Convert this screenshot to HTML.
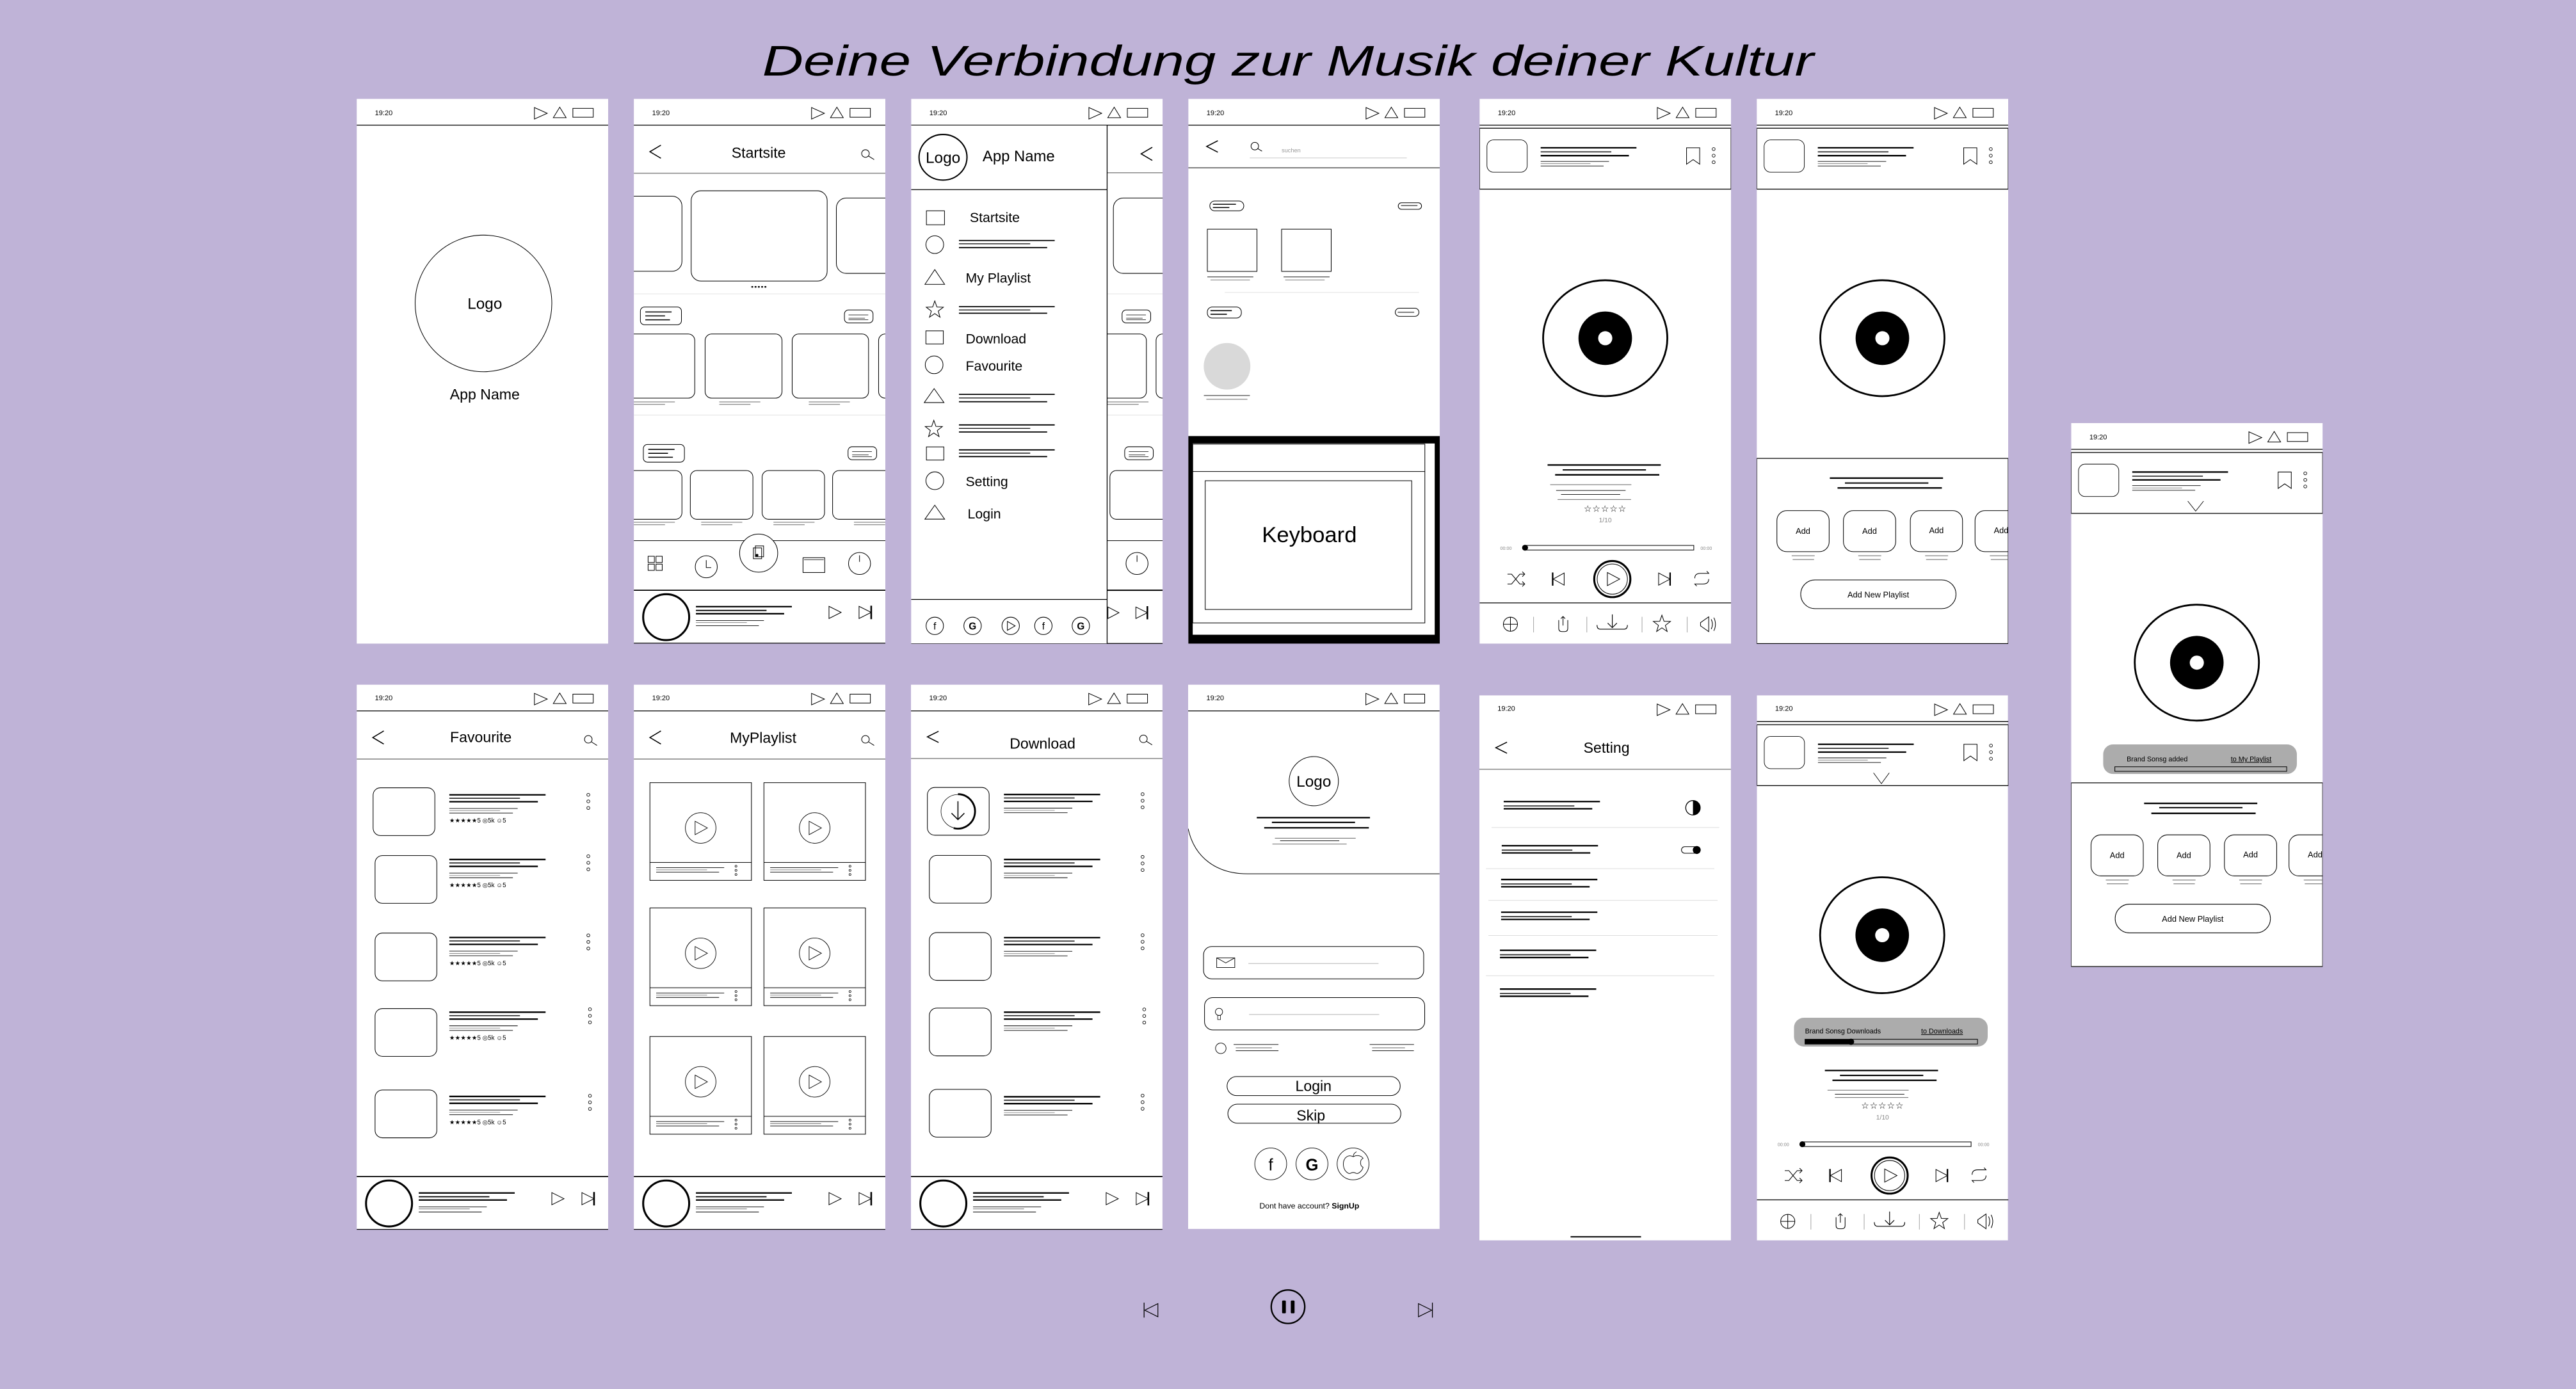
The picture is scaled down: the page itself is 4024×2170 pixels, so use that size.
<!DOCTYPE html>
<html><head><meta charset="utf-8">
<style>
html,body{margin:0;padding:0;background:#bfb3d7;}
svg{display:block;}
svg text{stroke:none;fill:#000;font-family:"Liberation Sans",sans-serif;}
</style></head>
<body>
<svg xmlns="http://www.w3.org/2000/svg" width="4024" height="2170" viewBox="0 0 1568 846" preserveAspectRatio="none">
<defs>
<clipPath id="fc" clipPathUnits="userSpaceOnUse"><rect x="0" y="0" width="153.1" height="332"/></clipPath>
<g id="sbi" stroke-width=".4"><path d="M108.2,5.3 L116,8.8 L108.2,12.3Z M123.6,5.1 L119.7,11.5 L127.5,11.5Z"/><rect x="131.6" y="5.8" width="12.4" height="5.4"/><path d="M0,16H153.1" stroke-width=".5"/></g>
<g id="hdr"><path d="M16.5,28.2 L9.8,32.2 L16.5,36.2" stroke-width=".6"/><circle cx="141" cy="33.3" r="2.3" stroke-width=".4"/><path d="M142.8,34.8 L146.3,37" stroke-width=".4"/><path d="M0,45.3H153.1" stroke="#888" stroke-width=".6"/></g>
<g id="mini"><path d="M0,0H153.1" stroke-width=".7"/><circle cx="19.7" cy="16.4" r="14" stroke-width="1.2"/><path d="M37.8,10h58.4M37.8,14.3h53.7" stroke-width=".9"/><path d="M37.8,12.3h43" stroke-width=".7"/><path d="M37.8,18.5h41.4M37.8,21.6h38.3" stroke-width=".35"/><path d="M37.8,19.7h31" stroke="#777" stroke-width=".35"/><path d="M118.8,9.8 L126.2,13.5 L118.8,17.2Z M137.1,9.8 L144.5,13.5 L137.1,17.2Z" stroke-width=".4"/><path d="M144.5,9.4V17.6" stroke-width="1"/><path d="M0,32.2H153.1" stroke-width=".5"/></g>
<g id="lb"><path d="M0,0h58.6M0,4.2h53.9" stroke-width=".9"/><path d="M0,2.1h43" stroke="#333" stroke-width=".7"/><path d="M0,8.3h41.6M0,11.1h38.7" stroke-width=".35"/><path d="M0,9.7h30.9" stroke="#888" stroke-width=".35"/></g>
<g id="l3"><path d="M0,0h58.6M0,4.4h53.9" stroke-width=".9"/><path d="M0,2.7h43" stroke="#333" stroke-width=".7"/></g>
<g id="d3" stroke-width=".35"><circle cx="0" cy="0" r=".9"/><circle cx="0" cy="4" r=".9"/><circle cx="0" cy="8" r=".9"/></g>
<polygon id="star" points="0,-5.5 1.3,-1.8 5.2,-1.7 2.1,0.7 3.2,4.4 0,2.2 -3.2,4.4 -2.1,0.7 -5.2,-1.7 -1.3,-1.8" stroke-width=".4"/>
<g id="disc"><ellipse cx="0" cy="0" rx="37.8" ry="35.3" stroke-width="1.1"/><circle r="16.3" fill="#000" stroke="none"/><circle r="4.3" fill="#fff" stroke="none"/></g>
<g id="ptop"><rect x="0" y="17.9" width="153.1" height="37.1" stroke-width=".5"/><rect x="4.5" y="25" width="24.5" height="19.7" rx="4" stroke-width=".35"/><path d="M37.2,29.8h58.3M37.2,34.6h53.7" stroke-width=".9"/><path d="M37.2,32.3h43" stroke="#333" stroke-width=".7"/><path d="M37.2,38.1h41.6M37.2,40.9h38.3" stroke-width=".35"/><path d="M37.2,39.5h30.3" stroke="#777" stroke-width=".35"/><path d="M126,29.8V39.8L130,37L134,39.8V29.8Z" stroke-width=".4"/><use href="#d3" x="142.5" y="30.6"/></g>
<g id="pbot"><path d="M41.4,223h68.9M46,229h63.4" stroke-width=".9"/><path d="M50.6,226h50.7" stroke-width=".8"/><path d="M43,235h49.4M47.5,244h44.7" stroke="#555" stroke-width=".35"/><path d="M46.6,238.5h42.3M49.6,241h36" stroke-width=".35"/>
<rect x="27.7" y="272" width="102.7" height="2.8" stroke-width=".4"/><circle cx="27.7" cy="273.4" r="1.8" fill="#000" stroke="none"/>
<path d="M17,289.5h2.5l5,6h3M17,295.5h2.5l5,-6h3M26,288l1.5,1.5l-1.5,1.5M26,294l1.5,1.5l-1.5,1.5" stroke-width=".4"/>
<path d="M44.5,288.5V296.5" stroke-width=".9"/><path d="M51.5,288.8L44.8,292.5L51.5,296.2Z" stroke-width=".4"/>
<circle cx="80.8" cy="292.5" r="11" stroke-width="1.2"/><circle cx="80.8" cy="292.5" r="9.2" stroke-width=".4"/><path d="M77.8,288.5L85.3,292.5L77.8,296.5Z" stroke-width=".4"/>
<path d="M109,288.8L116,292.5L109,296.2Z" stroke-width=".4"/><path d="M116,288.5V296.5" stroke-width=".9"/>
<path d="M131,292q0,-3 3.5,-3h5l-1.2,-1.3M139.5,292.5q0,3 -3.5,3h-5l1.2,1.3" stroke-width=".4"/>
<path d="M0,307H153.1" stroke-width=".5"/>
<circle cx="18.8" cy="320" r="4.3" stroke-width=".4"/><path d="M14.5,320h8.6M18.8,315.7v8.6" stroke-width=".4"/>
<path d="M48.2,317.5v5q0,2 2,2h1.5q2,0 2,-2v-5M50.8,315.3v5.5M49.5,316.6l1.3,-1.3l1.3,1.3" stroke-width=".4"/>
<path d="M71.5,320.5q0,2.5 2,2.5h14.5q2,0 2,-2.5M80.8,314v8M78,319.3l2.8,2.8l2.8,-2.8" stroke-width=".45"/>
<use href="#star" x="111" y="320"/>
<path d="M139.5,315.5L134.5,319L134.5,321L139.5,324.5Z M141,317q1.5,3 0,6M142.6,316q2,4 0,8" stroke-width=".4"/>
<path d="M32.9,315.5v9.5M65.3,315.5v9.5M98.9,315.5v9.5M126.4,315.5v9.5" stroke="#999" stroke-width=".35"/></g>
<g id="addb"><rect x="0" y="0" width="31.8" height="25" rx="6" stroke-width=".4"/><path d="M9,27.5h14M9.6,29.8h13" stroke="#666" stroke-width=".4"/></g>
<g id="pcard"><rect x="0" y="0" width="61.8" height="59.5" stroke-width=".4"/><path d="M0,48.6h61.8" stroke-width=".4"/><circle cx="30.9" cy="27.6" r="9.3" stroke-width=".35"/><path d="M27.5,23.5L35,27.6L27.5,31.7Z" stroke-width=".35"/><path d="M3.8,51.8h41.4M3.8,54.5h38.3" stroke-width=".35"/><path d="M3.8,53.1h31" stroke="#777" stroke-width=".35"/><circle cx="52.4" cy="50.9" r=".6" stroke-width=".3"/><circle cx="52.4" cy="53.4" r=".6" stroke-width=".3"/><circle cx="52.4" cy="55.9" r=".6" stroke-width=".3"/></g>
<g id="pill"><rect x="0" y="0" width="25" height="10.8" rx="2.5" stroke-width=".4"/><path d="M3,3h16M3,5.4h12M3,7.8h15" stroke-width=".6"/></g>
<g id="pills"><rect x="0" y="0" width="17.4" height="7.9" rx="2.5" stroke-width=".4"/><path d="M2.5,3h12M2.5,5h10M2.5,6h12" stroke-width=".3"/></g>
<g id="ul2"><path d="M0,0h25M0,1.5h19" stroke="#555" stroke-width=".35"/></g>
</defs>

<text x="784" y="46" font-size="26" font-style="italic" text-anchor="middle" textLength="640" lengthAdjust="spacingAndGlyphs" style="font-family:'Liberation Sans',sans-serif">Deine Verbindung zur Musik deiner Kultur</text>

<g fill="none" stroke="#000">

<!-- S1 splash -->
<g transform="translate(217.1,60.2)" clip-path="url(#fc)">
<rect width="153.1" height="331.8" fill="#fff" stroke="none"/>
<text x="11.1" y="10" font-size="4.3">19:20</text><use href="#sbi"/>
<circle cx="77.2" cy="124.6" r="41.6" stroke-width=".4"/>
<text x="78" y="128" font-size="9.5" text-anchor="middle">Logo</text>
<text x="78" y="183" font-size="9" text-anchor="middle">App Name</text>
</g>

<!-- S2 Startsite -->
<g transform="translate(385.8,60.2)" clip-path="url(#fc)">
<rect width="153.1" height="331.8" fill="#fff" stroke="none"/>
<text x="11.1" y="10" font-size="4.3">19:20</text><use href="#sbi"/>
<use href="#hdr"/>
<text x="76" y="36" font-size="9" text-anchor="middle">Startsite</text>
<rect x="-15" y="59.3" width="44.3" height="45.7" rx="6" stroke-width=".4"/>
<rect x="34.9" y="56" width="82.8" height="55" rx="6" stroke-width=".4"/>
<rect x="123.3" y="60.4" width="45" height="45.9" rx="6" stroke-width=".4"/>
<path d="M72,114.5h.2M74,114.5h.2M76,114.5h.2M78,114.5h.2M80,114.5h.2" stroke-width="1" stroke-linecap="round"/>
<path d="M0,118.8H153.1M0,192.6H153.1" stroke="#e4e4e4" stroke-width=".4"/>
<use href="#pill" x="4" y="126.8"/><use href="#pills" x="128.2" y="128.6"/>
<rect x="-10" y="143.2" width="47.1" height="39.1" rx="4" stroke-width=".4"/>
<rect x="43.4" y="143.2" width="46.8" height="39.1" rx="4" stroke-width=".4"/>
<rect x="96.4" y="143.2" width="46.5" height="39.1" rx="4" stroke-width=".4"/>
<rect x="149" y="143.2" width="46.5" height="39.1" rx="4" stroke-width=".4"/>
<use href="#ul2" x="0" y="184.6"/><use href="#ul2" x="52" y="184.6"/><use href="#ul2" x="106.5" y="184.6"/>
<use href="#pill" x="5.8" y="210.5"/><use href="#pills" x="130.4" y="211.9"/>
<rect x="-10" y="226.4" width="39.3" height="29.7" rx="4" stroke-width=".4"/>
<rect x="34.4" y="226.4" width="38.1" height="29.7" rx="4" stroke-width=".4"/>
<rect x="78.1" y="226.4" width="38" height="29.7" rx="4" stroke-width=".4"/>
<rect x="121" y="226.4" width="38" height="29.7" rx="4" stroke-width=".4"/>
<use href="#ul2" x="0" y="257.9"/><use href="#ul2" x="41" y="257.9"/><use href="#ul2" x="85" y="257.9"/><use href="#ul2" x="134" y="257.9"/>
<path d="M0,269.1H153.1" stroke-width=".4"/>
<rect x="8.7" y="278.6" width="3.8" height="3.8" stroke-width=".4"/><rect x="13.5" y="278.6" width="3.8" height="3.8" stroke-width=".4"/><rect x="8.7" y="283.4" width="3.8" height="3.8" stroke-width=".4"/><rect x="13.5" y="283.4" width="3.8" height="3.8" stroke-width=".4"/>
<circle cx="44.1" cy="285" r="6.7" stroke-width=".4"/><path d="M44.1,281v4.5h3" stroke-width=".4"/>
<circle cx="76" cy="276.7" r="11.6" fill="#fff" stroke-width=".4"/><rect x="74" y="272.3" width="5" height="6.6" stroke-width=".4"/><rect x="72.8" y="273.5" width="5" height="6.6" stroke-width=".4"/><circle cx="75" cy="278" r=".8" fill="#000" stroke="none"/>
<rect x="103" y="279.5" width="13.2" height="9" stroke-width=".4"/><path d="M103.6,280.7h12" stroke-width=".3"/>
<circle cx="137.4" cy="283" r="6.7" stroke-width=".4"/><path d="M137.4,278v4" stroke-width=".4"/>
<use href="#mini" y="299.3"/>
</g>

<!-- S3 drawer -->
<g transform="translate(554.6,60.2)" clip-path="url(#fc)">
<rect width="153.1" height="331.8" fill="#fff" stroke="none"/>
<text x="11.1" y="10" font-size="4.3">19:20</text><use href="#sbi"/>
<path d="M146.8,29.5L140,33.5L146.8,37.5" stroke-width=".6"/>
<path d="M119.3,45H153.1" stroke="#888" stroke-width=".6"/>
<rect x="123.1" y="60.4" width="40" height="45.9" rx="6" stroke-width=".4"/>
<path d="M119.3,118.8H153.1M119.3,192.6H153.1" stroke="#e4e4e4" stroke-width=".4"/>
<use href="#pills" x="128.4" y="128.6"/>
<rect x="110" y="143.2" width="33.2" height="39.1" rx="4" stroke-width=".4"/><rect x="149.1" y="143.2" width="30" height="39.1" rx="4" stroke-width=".4"/>
<use href="#ul2" x="119.5" y="184.6"/>
<use href="#pills" x="130" y="211.9"/>
<rect x="121" y="226.4" width="40" height="29.7" rx="4" stroke-width=".4"/>
<path d="M119.3,269.1H153.1" stroke-width=".4"/>
<circle cx="137.5" cy="283" r="6.7" stroke-width=".4"/><path d="M137.5,278v4" stroke-width=".4"/>
<path d="M119.3,299.3H153.1" stroke-width=".8"/>
<path d="M119.8,309.5L126.5,313L119.8,316.5Z M136.8,309.5L143.8,313L136.8,316.5Z" stroke-width=".4"/><path d="M143.8,309v8" stroke-width="1"/>
<path d="M0,331.7H153.1" stroke-width=".5"/>
<rect x="0" y="16.2" width="119.3" height="315.5" fill="#fff" stroke="none"/>
<path d="M119.3,16.2V331.7" stroke-width=".5"/>
<ellipse cx="19.4" cy="35.6" rx="14.6" ry="13.9" stroke-width=".8"/>
<text x="19.4" y="39" font-size="9.5" text-anchor="middle">Logo</text>
<text x="43.5" y="38" font-size="9.3">App Name</text>
<path d="M0,55.3H119.3" stroke-width=".5"/>
<rect x="9.3" y="68.2" width="11" height="8.5" stroke-width=".4"/><text x="35.7" y="75" font-size="8.3">Startsite</text>
<circle cx="14.4" cy="88.8" r="5.4" stroke-width=".4"/><path d="M29.1,86.3h58.3M29.1,90.6h53.7" stroke-width=".7"/><path d="M29.1,88.3h43.4" stroke-width=".5"/>
<path d="M8.4,113L14.4,104L20.4,113Z" stroke-width=".4"/><text x="33.2" y="112" font-size="8.3">My Playlist</text>
<use href="#star" x="14.4" y="128.6"/><path d="M29.1,126.6h58.3M29.1,130.6h53.7" stroke-width=".7"/><path d="M29.1,128.6h43.4" stroke-width=".5"/>
<rect x="9" y="141.3" width="10.6" height="8" stroke-width=".4"/><text x="33.2" y="149" font-size="8.3">Download</text>
<circle cx="14" cy="162" r="5.4" stroke-width=".4"/><text x="33.2" y="165.5" font-size="8.3">Favourite</text>
<path d="M8,185L14,176.5L20,185Z" stroke-width=".4"/><path d="M29.1,180h58.3M29.1,184.5h53.7" stroke-width=".7"/><path d="M29.1,182.2h43.4" stroke-width=".5"/>
<use href="#star" x="13.8" y="201.3"/><path d="M29.1,198.6h58.3M29.1,202.9h53.7" stroke-width=".7"/><path d="M29.1,200.7h43.4" stroke-width=".5"/>
<rect x="9.3" y="212" width="10.6" height="8" stroke-width=".4"/><path d="M29.1,213.8h58.3M29.1,217.9h53.7" stroke-width=".7"/><path d="M29.1,215.8h43.4" stroke-width=".5"/>
<circle cx="14.4" cy="232.6" r="5.4" stroke-width=".4"/><text x="33.2" y="236" font-size="8.3">Setting</text>
<path d="M8.4,256L14.4,247.5L20.4,256Z" stroke-width=".4"/><text x="34.4" y="255.5" font-size="8.3">Login</text>
<path d="M0,304.9H119.3" stroke-width=".5"/>
<circle cx="14.4" cy="321" r="5.3" stroke-width=".4"/><text x="14.4" y="323.2" font-size="6" text-anchor="middle">f</text>
<circle cx="37.4" cy="321" r="5.3" stroke-width=".4"/><text x="37.4" y="323.2" font-size="6" font-weight="bold" text-anchor="middle">G</text>
<circle cx="60.6" cy="321" r="5.3" stroke-width=".4"/><path d="M58.6,318.3L63.3,321L58.6,323.7Z" stroke-width=".4"/>
<circle cx="80.5" cy="321" r="5.3" stroke-width=".4"/><text x="80.5" y="323.2" font-size="6" text-anchor="middle">f</text>
<circle cx="103.3" cy="321" r="5.3" stroke-width=".4"/><text x="103.3" y="323.2" font-size="6" font-weight="bold" text-anchor="middle">G</text>
</g>

<!-- S4 search + keyboard -->
<g transform="translate(723.3,60.2)" clip-path="url(#fc)">
<rect width="153.1" height="331.8" fill="#fff" stroke="none"/>
<text x="11.1" y="10" font-size="4.3">19:20</text><use href="#sbi"/>
<path d="M18,25.5L11.2,29L18,32.5" stroke-width=".6"/>
<circle cx="40.5" cy="28.8" r="2.3" stroke-width=".4"/><path d="M42.3,30.3l2.6,1.6" stroke-width=".4"/>
<text x="56.8" y="32.5" font-size="3.6" style="fill:#999">suchen</text>
<path d="M37.4,36H133" stroke="#ccc" stroke-width=".4"/>
<path d="M0,42H153.1" stroke-width=".4"/>
<rect x="13.1" y="62.2" width="20.7" height="6" rx="3" stroke-width=".4"/><path d="M15,64.2h14M15,66.2h10" stroke-width=".6"/>
<rect x="127.8" y="63.3" width="14.2" height="4" rx="2" stroke-width=".4"/><path d="M129.5,65h10" stroke-width=".4"/>
<rect x="11.6" y="79.4" width="30.2" height="25.7" stroke-width=".4"/><rect x="56.8" y="79.4" width="30.2" height="25.7" stroke-width=".4"/>
<path d="M11.6,108.5h28M58,108.5h28" stroke-width=".35"/><path d="M13.5,110.3h24M59,110.3h24" stroke="#666" stroke-width=".35"/>
<path d="M22.2,117.9H140.4" stroke="#e0e0e0" stroke-width=".4"/>
<rect x="11.6" y="126.8" width="20.7" height="6.7" rx="3" stroke-width=".4"/><path d="M13.5,129h13M13.5,131.2h10" stroke-width=".6"/>
<rect x="126" y="127.5" width="14.4" height="5" rx="2.5" stroke-width=".4"/><path d="M127.5,130h10" stroke-width=".4"/>
<circle cx="23.6" cy="162.9" r="14.2" fill="#d9d9d9" stroke="none"/>
<path d="M9.5,180.7h28" stroke-width=".35"/><path d="M11,183h25" stroke="#555" stroke-width=".35"/>
<rect x="0" y="205.4" width="153.1" height="126.4" fill="#000" stroke="none"/>
<rect x="2.7" y="209.9" width="147.3" height="116.5" fill="#fff" stroke="none"/>
<rect x="2.7" y="210.3" width="141.3" height="108.9" stroke-width=".4"/>
<path d="M2.7,227H144" stroke-width=".4"/>
<rect x="10.3" y="232.6" width="125.7" height="78.4" stroke-width=".4"/>
<text x="73.7" y="270" font-size="13.5" text-anchor="middle">Keyboard</text>
</g>

<!-- S5 player -->
<g transform="translate(900.6,60.2)" clip-path="url(#fc)">
<rect width="153.1" height="331.8" fill="#fff" stroke="none"/>
<text x="11.1" y="10" font-size="4.3">19:20</text><use href="#sbi"/>
<use href="#ptop"/>
<use href="#disc" x="76.5" y="145.8"/>
<use href="#pbot"/>
<text x="76.5" y="251.5" font-size="5.5" text-anchor="middle" letter-spacing=".3">☆☆☆☆☆</text>
<text x="76.5" y="258" font-size="4" text-anchor="middle" style="fill:#888">1/10</text>
<text x="12.6" y="274.6" font-size="2.8" style="fill:#888">00:00</text>
<text x="134.5" y="274.6" font-size="2.8" style="fill:#888">00:00</text>
</g>

<!-- S6 add to playlist -->
<g transform="translate(1069.3,60.2)" clip-path="url(#fc)">
<rect width="153.1" height="331.8" fill="#fff" stroke="none"/>
<text x="11.1" y="10" font-size="4.3">19:20</text><use href="#sbi"/>
<use href="#ptop"/>
<use href="#disc" x="76.5" y="145.8"/>
<path d="M0,219H153.1V331.8H0Z" stroke-width=".5"/>
<path d="M44.5,231h68.9M49.2,237h63.5" stroke-width=".9"/><path d="M53.7,234h50.8" stroke-width=".8"/>
<use href="#addb" x="12.3" y="250.8"/><use href="#addb" x="52.8" y="250.8"/><use href="#addb" x="93.5" y="250.8"/><use href="#addb" x="132.9" y="250.8"/>
<text x="28.2" y="265" font-size="5" text-anchor="middle">Add</text><text x="68.7" y="265" font-size="5" text-anchor="middle">Add</text><text x="109.4" y="264.5" font-size="5" text-anchor="middle">Add</text><text x="148.8" y="264.5" font-size="5" text-anchor="middle">Add</text>
<rect x="26.8" y="293" width="94.5" height="17.5" rx="8.7" stroke-width=".4"/>
<text x="74" y="303.8" font-size="5" text-anchor="middle">Add New Playlist</text>
</g>

<!-- S7 added toast -->
<g transform="translate(1260.7,257.7)" clip-path="url(#fc)">
<rect width="153.1" height="331.3" fill="#fff" stroke="none"/>
<text x="11.1" y="10" font-size="4.3">19:20</text><use href="#sbi"/>
<use href="#ptop"/>
<path d="M71,47.5L75.8,53.6L80.6,47.5" stroke-width=".35"/>
<use href="#disc" x="76.5" y="145.9"/>
<rect x="19.5" y="195.7" width="117.9" height="18" rx="6" fill="#acacac" stroke="none"/>
<text x="33.8" y="206" font-size="4.2">Brand Sonsg added</text>
<text x="97.2" y="206" font-size="4.2" text-decoration="underline">to My Playlist</text>
<rect x="26.6" y="209.3" width="104.6" height="2.8" stroke-width=".4"/>
<path d="M0,219.1H153.1V331H0Z" stroke-width=".5"/>
<path d="M44.4,231.6h68.9M48.8,237.7h63.5" stroke-width=".9"/><path d="M53.6,234.2h50.7" stroke-width=".8"/>
<use href="#addb" x="12.1" y="250.8"/><use href="#addb" x="52.7" y="250.8"/><use href="#addb" x="93.3" y="250.8"/><use href="#addb" x="132.6" y="250.8"/>
<text x="28" y="265" font-size="5" text-anchor="middle">Add</text><text x="68.6" y="265" font-size="5" text-anchor="middle">Add</text><text x="109.2" y="264.5" font-size="5" text-anchor="middle">Add</text><text x="148.5" y="264.5" font-size="5" text-anchor="middle">Add</text>
<rect x="26.8" y="293" width="94.5" height="17.5" rx="8.7" stroke-width=".4"/>
<text x="74" y="303.8" font-size="5" text-anchor="middle">Add New Playlist</text>
</g>

<!-- S8 Favourite -->
<g transform="translate(217.1,417)" clip-path="url(#fc)">
<rect width="153.1" height="331.6" fill="#fff" stroke="none"/>
<text x="11.1" y="9.5" font-size="4.3">19:20</text><use href="#sbi"/>
<use href="#hdr"/>
<text x="75.6" y="35" font-size="9" text-anchor="middle">Favourite</text>
<rect x="10" y="62.8" width="37.6" height="29.1" rx="4.5" stroke-width=".4"/>
<rect x="11.2" y="104.1" width="37.6" height="29.1" rx="4.5" stroke-width=".4"/>
<rect x="11.2" y="151.3" width="37.6" height="29.1" rx="4.5" stroke-width=".4"/>
<rect x="11.2" y="197.3" width="37.6" height="29.1" rx="4.5" stroke-width=".4"/>
<rect x="11.2" y="246.9" width="37.6" height="29.1" rx="4.5" stroke-width=".4"/>
<use href="#lb" x="56.4" y="67.1"/><use href="#lb" x="56.4" y="106.5"/><use href="#lb" x="56.4" y="154"/><use href="#lb" x="56.4" y="199.5"/><use href="#lb" x="56.4" y="250.8"/>
<text x="56.4" y="84" font-size="3.8">★★★★★5 ◎5k ☺5</text>
<text x="56.4" y="123.4" font-size="3.8">★★★★★5 ◎5k ☺5</text>
<text x="56.4" y="170.9" font-size="3.8">★★★★★5 ◎5k ☺5</text>
<text x="56.4" y="216.4" font-size="3.8">★★★★★5 ◎5k ☺5</text>
<text x="56.4" y="267.7" font-size="3.8">★★★★★5 ◎5k ☺5</text>
<use href="#d3" x="141" y="67.1"/><use href="#d3" x="141" y="104.5"/><use href="#d3" x="141" y="152.7"/><use href="#d3" x="142" y="197.7"/><use href="#d3" x="142" y="250.4"/>
<use href="#mini" y="299.6"/>
</g>

<!-- S9 MyPlaylist -->
<g transform="translate(385.8,417)" clip-path="url(#fc)">
<rect width="153.1" height="331.6" fill="#fff" stroke="none"/>
<text x="11.1" y="9.5" font-size="4.3">19:20</text><use href="#sbi"/>
<use href="#hdr"/>
<text x="78.7" y="35.5" font-size="9" text-anchor="middle">MyPlaylist</text>
<use href="#pcard" x="9.8" y="59.7"/><use href="#pcard" x="79.2" y="59.7"/>
<use href="#pcard" x="9.8" y="136"/><use href="#pcard" x="79.2" y="136"/>
<use href="#pcard" x="9.8" y="214.3"/><use href="#pcard" x="79.2" y="214.3"/>
<use href="#mini" y="299.6"/>
</g>

<!-- S10 Download -->
<g transform="translate(554.5,417)" clip-path="url(#fc)">
<rect width="153.1" height="331.6" fill="#fff" stroke="none"/>
<text x="11.1" y="9.5" font-size="4.3">19:20</text><use href="#sbi"/>
<path d="M16.8,28.4L10,31.8L16.8,35.2" stroke-width=".6"/>
<circle cx="141.5" cy="33" r="2.3" stroke-width=".4"/><path d="M143.3,34.5L146.8,36.7" stroke-width=".4"/>
<path d="M0,45H153.1" stroke="#888" stroke-width=".6"/>
<text x="80.1" y="39" font-size="9" text-anchor="middle">Download</text>
<rect x="10" y="62.6" width="37.6" height="29.1" rx="4.5" stroke-width=".4"/>
<circle cx="28.6" cy="77.2" r="10.3" stroke-width=".3"/>
<path d="M28.6,66.7A10.5,10.5 0 1 1 26,87.4" stroke-width="1.1"/>
<path d="M28.6,71V82M24.7,78.3L28.6,82.2L32.5,78.3" stroke-width=".6"/>
<rect x="11.2" y="104" width="37.6" height="29.1" rx="4.5" stroke-width=".4"/>
<rect x="11.2" y="151" width="37.6" height="29.1" rx="4.5" stroke-width=".4"/>
<rect x="11.2" y="197" width="37.6" height="29.1" rx="4.5" stroke-width=".4"/>
<rect x="11.2" y="246.5" width="37.6" height="29.1" rx="4.5" stroke-width=".4"/>
<use href="#lb" x="56.6" y="66.9"/><use href="#lb" x="56.6" y="106.5"/><use href="#lb" x="56.6" y="154.1"/><use href="#lb" x="56.6" y="199.5"/><use href="#lb" x="56.6" y="251"/>
<use href="#d3" x="141" y="66.7"/><use href="#d3" x="141" y="104.9"/><use href="#d3" x="141" y="152.6"/><use href="#d3" x="142" y="197.8"/><use href="#d3" x="141" y="250.3"/>
<use href="#mini" y="299.6"/>
</g>

<!-- S11 Login -->
<g transform="translate(723.2,417)" clip-path="url(#fc)">
<rect width="153.1" height="331.5" fill="#fff" stroke="none"/>
<text x="11.1" y="9.5" font-size="4.3">19:20</text><use href="#sbi"/>
<circle cx="76.5" cy="58.8" r="15" stroke-width=".4"/>
<text x="76.5" y="62.2" font-size="9.5" text-anchor="middle">Logo</text>
<path d="M41.8,81h68.9M46.3,87.2h63.7" stroke-width=".9"/><path d="M51,83.9h50.6" stroke-width=".8"/>
<path d="M52.8,93.5h49.2M51.3,97.1h45.2" stroke="#555" stroke-width=".35"/><path d="M56,95.1h36" stroke-width=".35"/>
<path d="M0,87.7C4,106 18,115.2 36,115.2H153.1" stroke-width=".4"/>
<rect x="9.4" y="159.5" width="134" height="19.7" rx="5" stroke-width=".4"/>
<rect x="17.4" y="166.4" width="11" height="5.9" stroke-width=".35"/><path d="M17.4,166.4L22.9,169.5L28.4,166.4" stroke-width=".35"/>
<path d="M36.7,169.8H115.9" stroke="#aaa" stroke-width=".35"/>
<rect x="10" y="190.6" width="134" height="19.7" rx="5" stroke-width=".4"/>
<circle cx="18.8" cy="199.3" r="2.2" stroke-width=".35"/><rect x="18" y="201.4" width="1.7" height="2.6" stroke-width=".3"/>
<path d="M37.1,200.9H116.3" stroke="#aaa" stroke-width=".35"/>
<circle cx="19.9" cy="221.5" r="3.2" stroke-width=".35"/>
<path d="M27.7,219.2h27.3M110.5,219.2h27M29,223h26M112,223h25.4" stroke-width=".35"/><path d="M29,221.2h22M112,221.2h20" stroke="#666" stroke-width=".35"/>
<rect x="23.7" y="238.7" width="105.4" height="11.6" rx="5.8" stroke-width=".4"/>
<text x="76.3" y="247.5" font-size="9" text-anchor="middle">Login</text>
<rect x="24.2" y="255.5" width="105.3" height="11.6" rx="5.8" stroke-width=".4"/>
<text x="74.7" y="265.5" font-size="9" text-anchor="middle">Skip</text>
<circle cx="50.3" cy="291.9" r="9.7" stroke-width=".35"/><text x="50.3" y="295.8" font-size="10" text-anchor="middle">f</text>
<circle cx="75.4" cy="291.9" r="9.7" stroke-width=".35"/><text x="75.4" y="295.8" font-size="10" font-weight="bold" text-anchor="middle">G</text>
<circle cx="100.4" cy="291.9" r="9.7" stroke-width=".35"/><path d="M100.5,287.5c-3,-1.5 -6,0.5 -6,4.5c0,4 3,6.5 4.5,5.5c1,-0.5 2,-0.5 3,0c1.5,1 4,-1.5 4.5,-3.5c-2,-1 -2.2,-4.5 0,-5.5c-1.5,-2 -4,-2 -6,-1zM100.5,287.5c0,-1.5 1,-2.5 2,-3" stroke-width=".35"/>
<text x="73.8" y="319" font-size="4.8" text-anchor="middle">Dont have account? <tspan font-weight="bold">SignUp</tspan></text>
</g>

<!-- S11b Setting -->
<g transform="translate(900.5,423.5)" clip-path="url(#fc)">
<rect width="153.3" height="332" fill="#fff" stroke="none"/>
<text x="11" y="9.5" font-size="4.3">19:20</text>
<path d="M108.2,5.3 L116,8.8 L108.2,12.3Z M123.6,5.1 L119.7,11.5 L127.5,11.5Z" stroke-width=".4"/><rect x="131.6" y="5.8" width="12.4" height="5.4" stroke-width=".4"/>
<path d="M16.8,28.5L10,31.9L16.8,35.3" stroke-width=".6"/>
<text x="77.4" y="35" font-size="9" text-anchor="middle">Setting</text>
<path d="M0,45H153.3" stroke="#888" stroke-width=".6"/>
<use href="#l3" x="14.8" y="64.7"/><use href="#l3" x="13.6" y="91.6"/><use href="#l3" x="13.2" y="112.2"/><use href="#l3" x="13.2" y="132.1"/><use href="#l3" x="12.5" y="155.3"/><use href="#l3" x="12.5" y="178.9"/>
<path d="M7.4,80.5H146M4,105.6H143M5.5,124.9H145M5.5,146.3H145M4,170.8H143" stroke="#ddd" stroke-width=".4"/>
<circle cx="130" cy="68.5" r="4.4" stroke-width=".5"/><path d="M130,64.1A4.4,4.4 0 0 1 130,72.9Z" fill="#000" stroke="none"/>
<rect x="123" y="92.2" width="10" height="4" rx="2" stroke-width=".4"/><circle cx="132.3" cy="94.2" r="2.4" fill="#000" stroke="none"/>
<path d="M55.5,329.8H98.4" stroke-width=".8"/>
</g>

<!-- S12 download toast player -->
<g transform="translate(1069.4,423.5)" clip-path="url(#fc)">
<rect width="152.8" height="332" fill="#fff" stroke="none"/>
<text x="11.1" y="9.5" font-size="4.3">19:20</text><use href="#sbi"/>
<use href="#ptop"/>
<path d="M71,47.2L75.8,53.8L80.6,47.2" stroke-width=".35"/>
<use href="#disc" x="76.3" y="146.1"/>
<rect x="22.6" y="196.4" width="117.9" height="17.5" rx="6" fill="#acacac" stroke="none"/>
<text x="29.3" y="206" font-size="4.2">Brand Sonsg Downloads</text>
<text x="100" y="206" font-size="4.2" text-decoration="underline">to Downloads</text>
<rect x="29.3" y="209.5" width="105" height="2.9" stroke-width=".4"/><rect x="29.3" y="209.5" width="28" height="2.9" fill="#000" stroke="none"/><circle cx="57.3" cy="211" r="1.9" fill="#000" stroke="none"/>
<g transform="translate(0,5.5)"><path d="M41.4,223h68.9M46,229h63.4" stroke-width=".9"/><path d="M50.6,226h50.7" stroke-width=".8"/><path d="M43,235h49.4M47.5,239.5h44.7" stroke="#555" stroke-width=".35"/><path d="M47.5,237.5h42.3" stroke-width=".35"/></g>
<g><rect x="27.7" y="272" width="102.7" height="2.8" stroke-width=".4"/><circle cx="27.7" cy="273.4" r="1.8" fill="#000" stroke="none"/>
<path d="M17,289.5h2.5l5,6h3M17,295.5h2.5l5,-6h3M26,288l1.5,1.5l-1.5,1.5M26,294l1.5,1.5l-1.5,1.5" stroke-width=".4"/>
<path d="M44.5,288.5V296.5" stroke-width=".9"/><path d="M51.5,288.8L44.8,292.5L51.5,296.2Z" stroke-width=".4"/>
<circle cx="80.8" cy="292.5" r="11" stroke-width="1.2"/><circle cx="80.8" cy="292.5" r="9.2" stroke-width=".4"/><path d="M77.8,288.5L85.3,292.5L77.8,296.5Z" stroke-width=".4"/>
<path d="M109,288.8L116,292.5L109,296.2Z" stroke-width=".4"/><path d="M116,288.5V296.5" stroke-width=".9"/>
<path d="M131,292q0,-3 3.5,-3h5l-1.2,-1.3M139.5,292.5q0,3 -3.5,3h-5l1.2,1.3" stroke-width=".4"/>
<path d="M0,307.3H153.1" stroke-width=".5"/>
<circle cx="18.8" cy="320.4" r="4.3" stroke-width=".4"/><path d="M14.5,320.4h8.6M18.8,316.1v8.6" stroke-width=".4"/>
<path d="M48.2,317.9v5q0,2 2,2h1.5q2,0 2,-2v-5M50.8,315.7v5.5M49.5,317l1.3,-1.3l1.3,1.3" stroke-width=".4"/>
<path d="M71.5,320.9q0,2.5 2,2.5h14.5q2,0 2,-2.5M80.8,314.4v8M78,319.7l2.8,2.8l2.8,-2.8" stroke-width=".45"/>
<use href="#star" x="111" y="320.4"/>
<path d="M139.5,315.9L134.5,319.4L134.5,321.4L139.5,324.9Z M141,317.4q1.5,3 0,6M142.6,316.4q2,4 0,8" stroke-width=".4"/>
<path d="M32.9,315.9v9.5M65.3,315.9v9.5M98.9,315.9v9.5M126.4,315.9v9.5" stroke="#999" stroke-width=".35"/></g>
<text x="76.5" y="251.8" font-size="5.5" text-anchor="middle" letter-spacing=".3">☆☆☆☆☆</text>
<text x="76.5" y="258.3" font-size="4" text-anchor="middle" style="fill:#888">1/10</text>
<text x="12.6" y="274.6" font-size="2.8" style="fill:#888">00:00</text>
<text x="134.5" y="274.6" font-size="2.8" style="fill:#888">00:00</text>
</g>

<!-- bottom controls -->
<path d="M696.4,793.4V802.5" stroke-width=".5"/><path d="M704.8,794L696.8,798L704.8,802Z" stroke-width=".45"/>
<circle cx="784" cy="795.9" r="10.2" stroke-width=".9"/>
<rect x="780.4" y="792.1" width="2.3" height="7.8" rx=".6" fill="#000" stroke="none"/><rect x="785.7" y="792.1" width="2.3" height="7.8" rx=".6" fill="#000" stroke="none"/>
<path d="M863.4,794L871.5,798L863.4,802Z" stroke-width=".45"/><path d="M871.9,793.4V802.5" stroke-width=".5"/>
</g>
</svg>
</body></html>
